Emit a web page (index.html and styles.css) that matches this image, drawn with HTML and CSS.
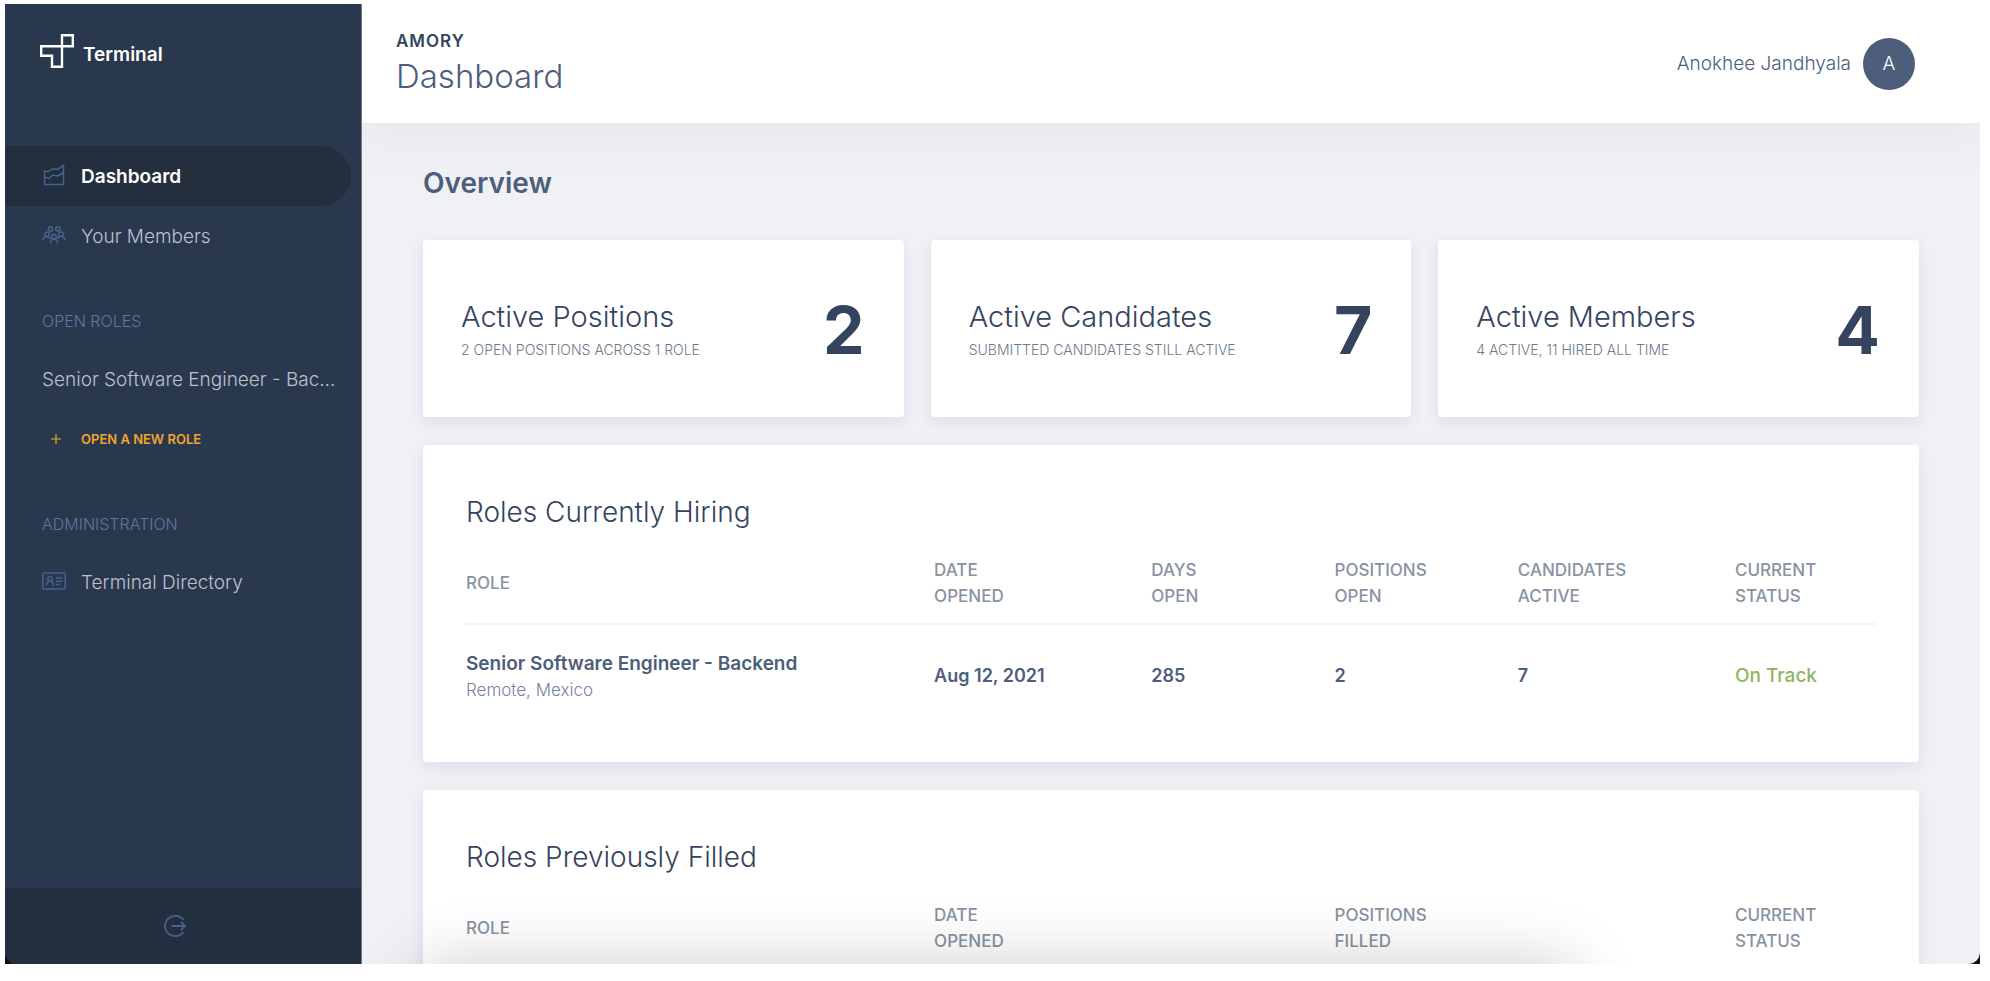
FILE: index.html
```html
<!DOCTYPE html>
<html lang="en">
<head>
<meta charset="utf-8">
<title>Terminal – Dashboard</title>
<link rel="stylesheet" href="styles.css">
</head>
<body>
<div class="frame">
<div class="window">
  <aside class="sidebar">
    <a class="brand" href="#">
      <svg class="brand-mark" viewBox="0 0 34 34" fill="none" stroke="currentColor" stroke-width="2.400"><path d="M22 1.200h10.800v11H22zM22 12.200H1.200v9.600h10.800v11h10V12"/></svg>
      <span>Terminal</span>
    </a>
    <nav class="nav">
      <a class="nav-item nav-item-active" href="#">
        <svg class="icon" viewBox="0 0 24 24" fill="none" stroke="currentColor" stroke-width="1.500"><path d="M2.500 7l3.500 .8 4.500-3 5.500 .5 5.500-4V20.500h-19zM2.500 13l4 1.500 4.500-3.500 5 1 5.500-3.500"/></svg>
        <span>Dashboard</span>
      </a>
      <a class="nav-item" href="#">
        <svg class="icon" viewBox="0 0 24 24" fill="none" stroke="currentColor" stroke-width="1.500"><circle cx="8.500" cy="5" r="2.200"/><circle cx="15.800" cy="5" r="2.200"/><circle cx="5" cy="10.200" r="2.300"/><circle cx="19" cy="10.200" r="2.300"/><circle cx="12" cy="12.800" r="2.300"/><path d="M1.200 16.500c0-2.700 1.600-4 3.800-4 1.800 0 3 .8 3.500 2.500M22.800 16.500c0-2.700-1.600-4-3.800-4-1.800 0-3 .8-3.500 2.500M8.500 19.500c0-2.800 1.300-4.200 3.500-4.200s3.500 1.400 3.500 4.200"/></svg>
        <span>Your Members</span>
      </a>
      <h2 class="nav-label">OPEN ROLES</h2>
      <a class="nav-item" href="#" title="Senior Software Engineer - Backend">Senior Software Engineer - Bac…</a>
      <button class="nav-item nav-action" type="button">
        <svg class="icon" viewBox="0 0 24 24" fill="none" stroke="currentColor" stroke-width="1.200"><path d="M14 7v10M9 12h10"/></svg>
        <span>OPEN A NEW ROLE</span>
      </button>
      <h2 class="nav-label">ADMINISTRATION</h2>
      <a class="nav-item" href="#">
        <svg class="icon" viewBox="0 0 24 24" fill="none" stroke="currentColor" stroke-width="1.500"><rect x=".8" y="3" width="22.400" height="16" rx="1.500"/><circle cx="8" cy="8.800" r="2.200"/><path d="M4.500 15.500c0-2.800 1.300-4.300 3.500-4.300s3.500 1.500 3.500 4.300M14 8h6.500M14 11.300h6.500M14 14.600h4"/></svg>
        <span>Terminal Directory</span>
      </a>
    </nav>
    <div class="sidebar-foot">
      <button class="logout" type="button" aria-label="Log out">
        <svg class="icon" viewBox="0 0 24 24" fill="none" stroke="currentColor" stroke-width="1.800"><path d="M20.500 6A10.200 10.200 0 1 0 20.500 18M8.500 12h13M18 8l4 4-4 4"/></svg>
      </button>
    </div>
  </aside>
  <main class="main">
    <header class="topbar">
      <div>
        <p class="company">AMORY</p>
        <h1 class="page-title">Dashboard</h1>
      </div>
      <button class="user" type="button"><span>Anokhee Jandhyala</span><span class="avatar">A</span></button>
    </header>
    <div class="content">
      <h2 class="section-title">Overview</h2>
      <div class="cards">
        <section class="card stat">
          <div><h3 class="stat-title">Active Positions</h3><p class="stat-note">2 OPEN POSITIONS ACROSS 1 ROLE</p></div>
          <strong class="stat-value">2</strong>
        </section>
        <section class="card stat">
          <div><h3 class="stat-title">Active Candidates</h3><p class="stat-note">SUBMITTED CANDIDATES STILL ACTIVE</p></div>
          <strong class="stat-value">7</strong>
        </section>
        <section class="card stat">
          <div><h3 class="stat-title">Active Members</h3><p class="stat-note">4 ACTIVE, 11 HIRED ALL TIME</p></div>
          <strong class="stat-value">4</strong>
        </section>
      </div>
      <section class="card panel">
        <h3 class="panel-title">Roles Currently Hiring</h3>
        <table class="roles">
          <colgroup><col class="c-role"><col class="c-wide"><col class="c-mid"><col class="c-mid"><col class="c-wide"><col></colgroup>
          <thead><tr><th>ROLE</th><th>DATE<br>OPENED</th><th>DAYS<br>OPEN</th><th>POSITIONS<br>OPEN</th><th>CANDIDATES<br>ACTIVE</th><th>CURRENT<br>STATUS</th></tr></thead>
          <tbody><tr>
            <td class="role-cell"><span class="role-name">Senior Software Engineer - Backend</span><span class="role-place">Remote, Mexico</span></td>
            <td>Aug 12, 2021</td><td>285</td><td>2</td><td>7</td><td class="on-track">On Track</td>
          </tr></tbody>
        </table>
      </section>
      <section class="card panel">
        <h3 class="panel-title">Roles Previously Filled</h3>
        <table class="roles">
          <colgroup><col class="c-role"><col class="c-half"><col class="c-half"><col></colgroup>
          <thead><tr><th>ROLE</th><th>DATE<br>OPENED</th><th>POSITIONS<br>FILLED</th><th>CURRENT<br>STATUS</th></tr></thead>
        </table>
      </section>
    </div>
    <div class="edge-shadow"></div>
  </main>
</div>
</div>
</body>
</html>
```

FILE: styles.css
```css
* { box-sizing: border-box; }
body {
  margin: 0;
  height: 100vh;
  padding: 4px 10px 17px 5px;
  background: #fff;
  font-family: Inter, "Open Sans", sans-serif;
  color: #4c5e7a;
}
h1, h2, h3, p { margin: 0; font-weight: 300; }
a { color: inherit; text-decoration: none; }
button { border: 0; padding: 0; background: none; font: inherit; color: inherit; cursor: pointer; }

.frame { height: 100%; background: #111; overflow: hidden; }
.window {
  height: 100%;
  display: flex;
  overflow: hidden;
  border-radius: 0 0 12px 12px;
}

.sidebar {
  flex: none;
  width: 357px;
  display: flex;
  flex-direction: column;
  background: #2a384e;
  border-right: 1px solid #6f7a8b;
}
.brand {
  display: flex;
  align-items: flex-end;
  gap: 9px;
  padding: 30px 35px 0;
  color: #fff;
  font-size: 19px;
  font-weight: 600;
  line-height: 26px;
}
.brand-mark { width: 34px; height: 34px; }
.nav { flex: 1; padding-top: 78px; }
.nav-item {
  display: flex;
  align-items: center;
  gap: 15px;
  width: 346px;
  height: 60px;
  padding: 0 16px 0 37px;
  border-radius: 0 30px 30px 0;
  color: #bcc1ca;
  font-size: 19px;
  font-weight: 300;
  white-space: nowrap;
}
.icon { flex: none; width: 24px; height: 24px; color: #46628c; }
.nav-item-active { background: #232f3e; color: #fff; font-weight: 600; }
.nav-action { color: #efa52f; font-size: 13px; font-weight: 600; }
.nav-action .icon { color: inherit; }
.nav-label {
  margin-top: 27px;
  padding-left: 37px;
  font-size: 16px;
  line-height: 56px;
  color: #62769c;
}
.sidebar-foot {
  height: 76px;
  display: flex;
  align-items: center;
  justify-content: center;
  padding-right: 16px;
  background: #232f3e;
}
.logout { display: flex; }

.main {
  position: relative;
  flex: 1;
  min-width: 0;
  overflow: hidden;
  background: #f0f1f5;
}
.topbar {
  display: flex;
  align-items: center;
  justify-content: space-between;
  height: 119px;
  padding: 0 65px 0 34px;
  background: #fff;
  box-shadow: 0 10px 60px rgba(60, 80, 110, 0.07);
}
.company { font-size: 17px; font-weight: 600; line-height: 24px; letter-spacing: 1px; color: #34445e; }
.page-title { font-size: 33px; line-height: 46px; }
.user { display: flex; align-items: center; gap: 12px; font-size: 19px; font-weight: 300; }
.avatar {
  width: 52px;
  height: 52px;
  border-radius: 50%;
  background: #4c5e7a;
  color: #fff;
  line-height: 52px;
  text-align: center;
}
.content { padding: 40px 61px 0; }
.section-title { font-size: 28px; font-weight: 600; line-height: 40px; }
.cards { display: grid; grid-template-columns: repeat(3, 1fr); gap: 27px; margin-top: 37px; }
.card {
  background: #fff;
  border-radius: 4px;
  box-shadow: 0 5px 15px rgba(70, 90, 130, 0.12);
}
.stat {
  display: flex;
  align-items: center;
  justify-content: space-between;
  height: 177px;
  padding: 3px 39px 0 38px;
}
.stat-title { font-size: 29px; line-height: 40px; color: #34445e; }
.stat-note { font-size: 14px; line-height: 26px; color: #6c7a8b; }
.stat-value { font-size: 66px; font-weight: 700; line-height: 68px; color: #34445e; }
.panel { height: 317px; margin-top: 28px; padding: 49px 43px 0; }
.panel-title { font-size: 28px; line-height: 36px; color: #34445e; }
.roles { width: 100%; margin-top: 14px; border-collapse: collapse; table-layout: fixed; }
.c-role { width: 33.2%; }
.c-wide { width: 15.4%; }
.c-mid { width: 13%; }
.c-half { width: 28.4%; }
.roles th {
  height: 80px;
  padding: 0 0 2px;
  border-bottom: 2px solid #f2f3f5;
  text-align: left;
  font-size: 17px;
  font-weight: 500;
  line-height: 26px;
  color: #8793a2;
}
.roles td { height: 101px; padding: 0; font-size: 18px; font-weight: 600; line-height: 27px; }
.roles .role-cell { padding-top: 4px; font-size: 19px; }
.role-name, .role-place { display: block; }
.role-place { font-size: 17px; font-weight: 300; color: #7684a0; }
.roles .on-track { color: #8db564; font-size: 19px; font-weight: 500; }

/* Soft shade along the bottom edge of the window */
.edge-shadow {
  position: absolute;
  top: 100%;
  left: 58px;
  right: 406px;
  height: 120px;
  box-shadow: 0 0 66px rgba(0, 0, 0, 0.2);
  pointer-events: none;
}
```
